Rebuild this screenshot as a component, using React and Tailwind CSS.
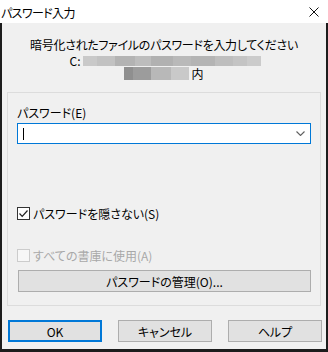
import React from 'react';

const font = "font-['Yu_Gothic_UI','Noto_Sans_CJK_JP',sans-serif] [font-feature-settings:'palt']";

// blurred path shown in the prompt (pixelated blocks)
const pathBlocks = [
    ['w-[14px]', 'bg-[#c9c9c9]'],
    ['w-[18px]', 'bg-[#c2c2c2]'],
    ['w-[20px]', 'bg-[#b3b3b3]'],
    ['w-[16px]', 'bg-[#bdbdbd]'],
    ['w-[22px]', 'bg-[#b1b1b1]'],
    ['w-[18px]', 'bg-[#b9b9b9]'],
    ['w-[24px]', 'bg-[#b4b4b4]'],
    ['w-[18px]', 'bg-[#bebebe]'],
    ['w-[14px]', 'bg-[#c4c4c4]'],
    ['w-[14px]', 'bg-[#cbcbcb]'],
];

const nameBlocks = [
    ['w-[9px]', 'bg-[#8f8f8f]'],
    ['w-[18px]', 'bg-[#9c9c9c]'],
    ['w-[20px]', 'bg-[#b8b8b8]'],
    ['w-[18px]', 'bg-[#c9c9c9]'],
];

const Button = ({ children, isDefault = false, className = '' }) => (
    <div className={`h-[22px] flex items-center justify-center bg-[#e1e1e1] ${isDefault ? 'border-2 border-[#0078d7]' : 'border border-[#adadad]'} ${className}`}>
        {children}
    </div>
);

export default function App() {
    return (
        <div className={`w-[328px] h-[352px] flex flex-col bg-[#f0f0f0] text-[12px] leading-[15px] text-black ${font}`}>
            {/* title bar */}
            <div className="h-[23px] bg-white flex items-center justify-between shrink-0">
                <span className="pl-[1px] pt-[1px] tracking-[-0.6px]">パスワード入力</span>
                <svg width="10" height="10" viewBox="0 0 10 10" className="mr-[9px] mt-[1px]">
                    <path d="M0.5 0.5 L9.5 9.5 M9.5 0.5 L0.5 9.5" stroke="#111" strokeWidth="1" />
                </svg>
            </div>

            <div className="flex-1 border-l-2 border-r-2 border-b-[3px] border-[#1c1c1c] flex flex-col">
                {/* prompt */}
                <div className="flex flex-col items-center pt-[14px]">
                    <div className="h-[16px] tracking-[-0.3px]">暗号化されたファイルのパスワードを入力してください</div>
                    <div className="mt-[2px] h-[12px] leading-[12px] flex items-center ml-[2px]">
                        <span>C:</span>
                        <div className="flex h-[10px] ml-[2px]">
                            {pathBlocks.map(([w, c], i) => <div key={i} className={`${w} ${c}`} />)}
                        </div>
                    </div>
                    <div className="h-[13px] leading-[13px] flex items-center">
                        <div className="flex h-[13px]">
                            {nameBlocks.map(([w, c], i) => <div key={i} className={`${w} ${c}`} />)}
                        </div>
                        <span className="ml-[2px]">内</span>
                    </div>
                </div>

                {/* group box */}
                <div className="ml-[5px] mt-[12px] w-[314px] h-[214px] border border-[#dcdcdc] px-[9px] pt-[12px]">
                    <div>パスワード(E)</div>
                    <div className="mt-[3px] h-[21px] w-[294px] bg-white border border-[#0078d7] flex items-center justify-between pl-[5px] pr-[5px]">
                        <div className="w-[1px] h-[12px] bg-black" />
                        <svg width="9" height="5" viewBox="0 0 9 5">
                            <path d="M0.5 0.5 L4.5 4.5 L8.5 0.5" fill="none" stroke="#606060" strokeWidth="1.1" />
                        </svg>
                    </div>

                    <div className="mt-[63px] flex items-center h-[13px]">
                        <div className="w-[13px] h-[13px] border border-[#333] bg-white flex items-center justify-center">
                            <svg width="11" height="11" viewBox="0 0 11 11">
                                <path d="M1.5 5.5 L4.2 8.3 L9.5 2.5" fill="none" stroke="#222" strokeWidth="1.2" />
                            </svg>
                        </div>
                        <span className="ml-[3px]">パスワードを隠さない(S)</span>
                    </div>

                    <div className="mt-[29px] flex items-center h-[13px] text-[#a8a8a8]">
                        <div className="w-[13px] h-[13px] border border-[#cccccc] bg-[#f7f7f7]" />
                        <span className="ml-[3px]">すべての書庫に使用(A)</span>
                    </div>

                    <Button className="mt-[8px] w-[293px] ml-[1px]">パスワードの管理(O)...</Button>
                </div>

                {/* dialog buttons */}
                <div className="flex ml-[6px] mt-[14px] gap-[16px]">
                    <Button isDefault className="w-[94px]">OK</Button>
                    <Button className="w-[94px]">キャンセル</Button>
                    <Button className="w-[94px]">ヘルプ</Button>
                </div>
            </div>
        </div>
    );
}
